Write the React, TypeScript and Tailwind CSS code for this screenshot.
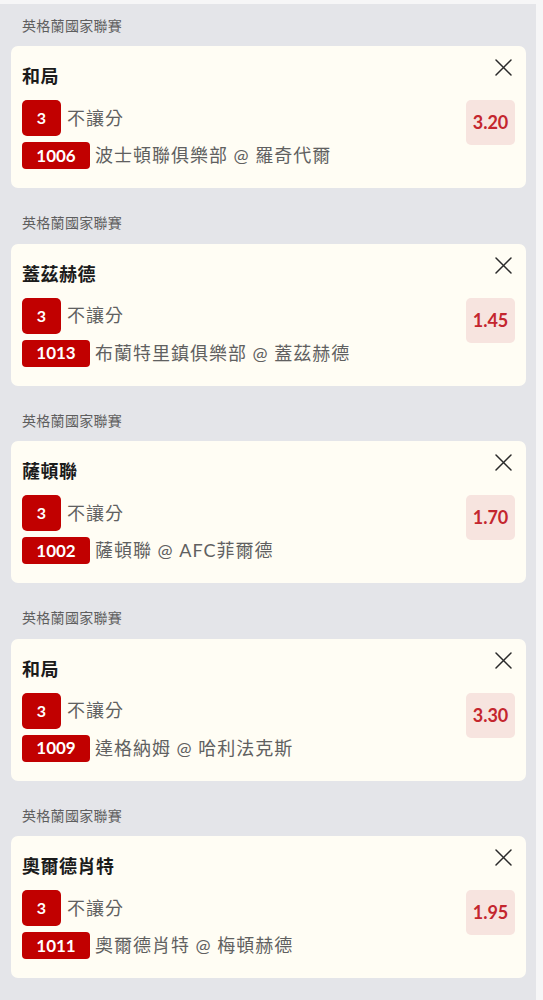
import React from "react";

type Bet = { team: string; code: string; match: string; odds: string };

const bets: Bet[] = [
  { team: "和局", code: "1006", match: "波士頓聯俱樂部 @ 羅奇代爾", odds: "3.20" },
  { team: "蓋茲赫德", code: "1013", match: "布蘭特里鎮俱樂部 @ 蓋茲赫德", odds: "1.45" },
  { team: "薩頓聯", code: "1002", match: "薩頓聯 @ AFC菲爾德", odds: "1.70" },
  { team: "和局", code: "1009", match: "達格納姆 @ 哈利法克斯", odds: "3.30" },
  { team: "奧爾德肖特", code: "1011", match: "奧爾德肖特 @ 梅頓赫德", odds: "1.95" },
];

function CloseIcon() {
  return (
    <svg width="17" height="17" viewBox="0 0 17 17" fill="none">
      <path d="M1 1 L16 16 M16 1 L1 16" stroke="#2a2a2a" strokeWidth="1.5" strokeLinecap="round" />
    </svg>
  );
}

function Card({ bet }: { bet: Bet }) {
  return (
    <div className="relative h-[142px] rounded-[7px] bg-[#fffdf4] mb-[13.5px]">
      <div className="absolute right-[14px] top-[13px]">
        <CloseIcon />
      </div>
      <div className="flex flex-col pl-[11px] pt-[18px]">
        <div className="h-[24px] flex items-center text-[18px] font-bold text-[#1b1b1b] leading-none tracking-[0.5px]">
          {bet.team}
        </div>
        <div className="flex items-center mt-[12px] h-[36px]">
          <div className="w-[39px] h-[36px] rounded-[5px] bg-[#c10000] text-white text-[16px] font-bold flex items-center justify-center">
            3
          </div>
          <span className="ml-[6px] text-[18px] text-[#606060] tracking-[1px]">不讓分</span>
        </div>
        <div className="flex items-center mt-[6px] h-[27px]">
          <div className="w-[68px] h-[27px] rounded-[4px] bg-[#c10000] text-white text-[17px] font-bold flex items-center justify-center">
            {bet.code}
          </div>
          <span className="ml-[5px] text-[18px] text-[#606060] tracking-[1px]">{bet.match}</span>
        </div>
      </div>
      <div className="absolute right-[11px] top-[54px] w-[49px] h-[45px] rounded-[5px] bg-[#f7e4df] flex items-center justify-center text-[18px] font-bold text-[#c4262e]">
        {bet.odds}
      </div>
    </div>
  );
}

export default function App() {
  return (
    <div
      className="flex h-[1000px] overflow-hidden bg-[#f6f6f7]"
      style={{ fontFamily: "Lato, 'Noto Sans CJK TC', sans-serif" }}
    >
      <div className="w-[536px] mt-[4px] bg-[#e4e5e9] pl-[11px] pr-[10px]">
        {bets.map((b, i) => (
          <div key={i}>
            <div className="h-[42px] flex items-center pl-[11px] text-[14px] text-[#5e5e5e] tracking-[0.3px]">
              英格蘭國家聯賽
            </div>
            <Card bet={b} />
          </div>
        ))}
      </div>
    </div>
  );
}
